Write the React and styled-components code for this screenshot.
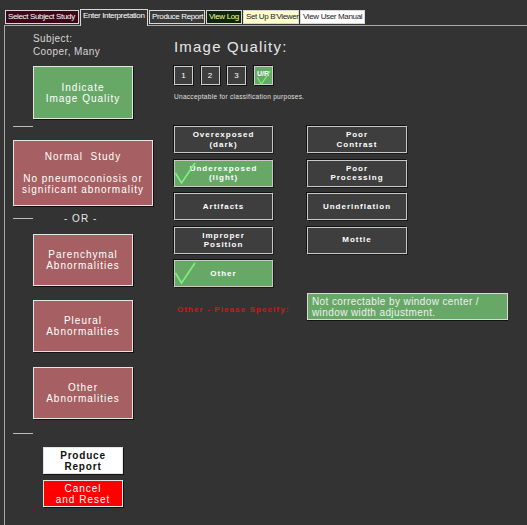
import React from "react";
import styled, { createGlobalStyle, css } from "styled-components";

const Global = createGlobalStyle`
  html, body { margin: 0; padding: 0; background: #333333; }
  body { font-family: "Liberation Sans", Arial, sans-serif; color: #e8e8e8; }
  #root { min-height: 525px; }
`;

const Page = styled.div`
  width: 527px;
  height: 525px;
  overflow: hidden;
  background: #333333;
  display: flex;
  flex-direction: column;
`;

const TabBar = styled.div`
  display: flex;
  align-items: flex-end;
  gap: 1px;
  padding: 9px 0 0 5px;
  height: 16px;
  position: relative;
  z-index: 1;
`;

const tabThemes = {
  maroon: css`background: #3c0818; color: #fff;`,
  active: css`background: #333333; color: #fff;`,
  gray: css`background: #3a3a3a; color: #fff;`,
  green: css`background: #0e260e; color: #ffff88;`,
  yellow: css`background: #ffffcc; color: #222;`,
  white: css`background: #ffffff; color: #222;`,
};

const Tab = styled.div`
  box-sizing: border-box;
  width: ${(p) => (p.$w ? `${p.$w}px` : "auto")};
  height: ${(p) => (p.$active ? 17 : 14)}px;
  margin-bottom: ${(p) => (p.$active ? -1 : 1)}px;
  border: 1px solid #d8d8d8;
  border-bottom: ${(p) => (p.$active ? "none" : "1px solid #d8d8d8")};
  font-size: 8px;
  letter-spacing: -0.35px;
  line-height: 12px;
  padding: 0 2px;
  white-space: nowrap;
  ${(p) => tabThemes[p.$theme]}
`;

const Panel = styled.div`
  margin-left: 4px;
  flex: 1;
  border-left: 1px solid #a8a8a8;
  border-top: 1px solid #a8a8a8;
  display: grid;
  grid-template-columns: 169px 1fr;
`;

const LeftCol = styled.div`
  display: flex;
  flex-direction: column;
  align-items: flex-start;
  padding-top: 6px;
`;

const SubjectBlock = styled.div`
  margin-left: 28px;
  font-size: 10px;
  line-height: 13px;
  letter-spacing: 0.4px;
  color: #d6d6d6;
`;

const bigColors = {
  green: "#67a867",
  rose: "#a65f62",
};

const BigButton = styled.div`
  box-sizing: border-box;
  margin-left: ${(p) => p.$indent}px;
  margin-top: ${(p) => p.$top}px;
  width: ${(p) => p.$w}px;
  height: ${(p) => p.$h}px;
  background: ${(p) => bigColors[p.$color]};
  border: 1px solid #e4e4e4;
  box-shadow: 1px 1px 0 #111;
  display: flex;
  flex-direction: column;
  align-items: center;
  justify-content: center;
  color: #fff;
  font-size: 10px;
  line-height: 11px;
  letter-spacing: 1px;
  text-align: center;
`;

const Spacer = styled.div`
  height: 11px;
`;

const Rule = styled.div`
  margin-left: 8px;
  margin-top: ${(p) => p.$top}px;
  width: 20px;
  height: 1px;
  background: #bdbdbd;
`;

const OrRow = styled.div`
  margin-top: 6px;
  margin-left: 8px;
  height: 12px;
  display: flex;
  align-items: center;
  gap: 31px;
  font-size: 10px;
  letter-spacing: 1px;
  color: #e8e8e8;
`;

const OrRule = styled.div`
  width: 20px;
  height: 1px;
  background: #bdbdbd;
`;

const smallThemes = {
  white: css`background: #ffffff; color: #111; font-weight: bold; letter-spacing: 0.8px;`,
  red: css`background: #ff0000; color: #fff; letter-spacing: 1px;`,
};

const SmallButton = styled.div`
  box-sizing: border-box;
  margin-left: 38px;
  margin-top: ${(p) => p.$top}px;
  width: 80px;
  height: 27px;
  border: 1px solid #e4e4e4;
  box-shadow: 1px 1px 0 #111;
  display: flex;
  flex-direction: column;
  align-items: center;
  justify-content: center;
  font-size: 10px;
  line-height: 11px;
  text-align: center;
  ${(p) => smallThemes[p.$theme]}
`;

const RightCol = styled.div`
  display: flex;
  flex-direction: column;
  align-items: flex-start;
  padding-top: 12px;
`;

const Title = styled.div`
  font-size: 15px;
  line-height: 18px;
  letter-spacing: 1.2px;
  color: #e6e6e6;
`;

const GradeRow = styled.div`
  margin-top: 10px;
  display: flex;
  gap: 7.5px;
`;

const GradeBox = styled.div`
  position: relative;
  box-sizing: border-box;
  width: 19px;
  height: 19px;
  background: ${(p) => (p.$on ? "#67a867" : "#3e3e3e")};
  border: 1px solid #cfcfcf;
  box-shadow: -1px -1px 0 #111, 1px 1px 0 #111;
  color: #fff;
  font-size: ${(p) => (p.$on ? 7 : 8)}px;
  font-weight: ${(p) => (p.$on ? "bold" : "normal")};
  display: flex;
  align-items: ${(p) => (p.$on ? "flex-start" : "center")};
  justify-content: center;
  line-height: 9px;
  padding-top: ${(p) => (p.$on ? 2 : 0)}px;
`;

const Caption = styled.div`
  margin-top: 7px;
  font-size: 6.5px;
  line-height: 9px;
  letter-spacing: 0.3px;
  color: #e0e0e0;
`;

const OptionGrid = styled.div`
  margin-top: 25px;
  display: grid;
  grid-template-columns: 99px 100px;
  column-gap: 34px;
  row-gap: 6.5px;
`;

const Option = styled.div`
  position: relative;
  box-sizing: border-box;
  height: 27px;
  grid-column: ${(p) => p.$col};
  background: ${(p) => (p.$on ? "#67a867" : "#3e3e3e")};
  border: 1px solid #c8c8c8;
  box-shadow: -1px -1px 0 #111, 1px 1px 0 #1a1a1a;
  color: #fff;
  font-size: 8px;
  font-weight: bold;
  letter-spacing: 1px;
  line-height: 9.5px;
  display: flex;
  flex-direction: column;
  align-items: center;
  justify-content: center;
  text-align: center;
`;

const Check = styled.svg`
  position: absolute;
  left: ${(p) => p.$x}px;
  top: ${(p) => p.$y}px;
  pointer-events: none;
  overflow: visible;
`;

const SpecifyRow = styled.div`
  margin-top: 6px;
  display: grid;
  grid-template-columns: 133px 201px;
  align-items: center;
`;

const SpecifyLabel = styled.div`
  padding: 5px 0 0 3px;
  color: #d01818;
  font-size: 8px;
  font-weight: bold;
  letter-spacing: 1.1px;
`;

const SpecifyBox = styled.div`
  box-sizing: border-box;
  height: 27px;
  background: #67a867;
  border: 1px solid #d8d8d8;
  box-shadow: 0 1px 0 #111;
  color: #f0f0f0;
  font-size: 10px;
  line-height: 11px;
  letter-spacing: 0.4px;
  padding: 2px 4px;
`;

const CheckMark = ({ x = 0, y = 0, w = 21, h = 22 }) => (
  <Check $x={x} $y={y} width={w} height={h} viewBox="0 0 21 22">
    <polyline
      points="0.5,11 6.5,21 20,1"
      fill="none"
      stroke="#80f080"
      strokeWidth="1.6"
    />
  </Check>
);

const tabs = [
  { t: "Select Subject Study", w: 74, theme: "maroon" },
  { t: "Enter Interpretation", w: 68, theme: "active", active: true },
  { t: "Produce Report", w: 56, theme: "gray" },
  { t: "View Log", w: 36, theme: "green" },
  { t: "Set Up B'Viewer", w: 56, theme: "yellow" },
  { t: "View User Manual", theme: "white" },
];

const options = [
  { lines: ["Overexposed", "(dark)"], col: 1 },
  { lines: ["Poor", "Contrast"], col: 2 },
  { lines: ["Underexposed", "(light)"], col: 1, on: true },
  { lines: ["Poor", "Processing"], col: 2 },
  { lines: ["Artifacts"], col: 1 },
  { lines: ["Underinflation"], col: 2 },
  { lines: ["Improper", "Position"], col: 1 },
  { lines: ["Mottle"], col: 2 },
  { lines: ["Other"], col: 1, on: true },
];

export default function App() {
  return (
    <Page>
      <Global />
      <TabBar>
        {tabs.map((tb) => (
          <Tab key={tb.t} $w={tb.w} $theme={tb.theme} $active={tb.active}>
            {tb.t}
          </Tab>
        ))}
      </TabBar>
      <Panel>
        <LeftCol>
          <SubjectBlock>
            <div>Subject:</div>
            <div>Cooper, Many</div>
          </SubjectBlock>
          <BigButton $indent={28} $top={8} $w={100} $h={53} $color="green">
            <div>Indicate</div>
            <div>Image Quality</div>
          </BigButton>
          <Rule $top={7} />
          <BigButton $indent={8} $top={13} $w={140} $h={66} $color="rose">
            <div>Normal&nbsp;&nbsp;Study</div>
            <Spacer />
            <div>No pneumoconiosis or</div>
            <div>significant abnormality</div>
          </BigButton>
          <OrRow>
            <OrRule />
            <span>- OR -</span>
          </OrRow>
          <BigButton $indent={28} $top={10} $w={100} $h={52} $color="rose">
            <div>Parenchymal</div>
            <div>Abnormalities</div>
          </BigButton>
          <BigButton $indent={28} $top={14} $w={100} $h={52} $color="rose">
            <div>Pleural</div>
            <div>Abnormalities</div>
          </BigButton>
          <BigButton $indent={28} $top={15} $w={100} $h={52} $color="rose">
            <div>Other</div>
            <div>Abnormalities</div>
          </BigButton>
          <Rule $top={14} />
          <SmallButton $top={13} $theme="white">
            <div>Produce</div>
            <div>Report</div>
          </SmallButton>
          <SmallButton $top={6} $theme="red">
            <div>Cancel</div>
            <div>and Reset</div>
          </SmallButton>
        </LeftCol>
        <RightCol>
          <Title>Image Quality:</Title>
          <GradeRow>
            <GradeBox>1</GradeBox>
            <GradeBox>2</GradeBox>
            <GradeBox>3</GradeBox>
            <GradeBox $on>
              U/R
              <CheckMark x={2} y={3} w={14} h={15} />
            </GradeBox>
          </GradeRow>
          <Caption>Unacceptable for classification purposes.</Caption>
          <OptionGrid>
            {options.map((o) => (
              <Option key={o.lines[0]} $col={o.col} $on={o.on}>
                {o.lines.map((l) => (
                  <div key={l}>{l}</div>
                ))}
                {o.on && <CheckMark x={0} y={1} />}
              </Option>
            ))}
          </OptionGrid>
          <SpecifyRow>
            <SpecifyLabel>Other - Please Specify:</SpecifyLabel>
            <SpecifyBox>Not correctable by window center / window width adjustment.</SpecifyBox>
          </SpecifyRow>
        </RightCol>
      </Panel>
    </Page>
  );
}
